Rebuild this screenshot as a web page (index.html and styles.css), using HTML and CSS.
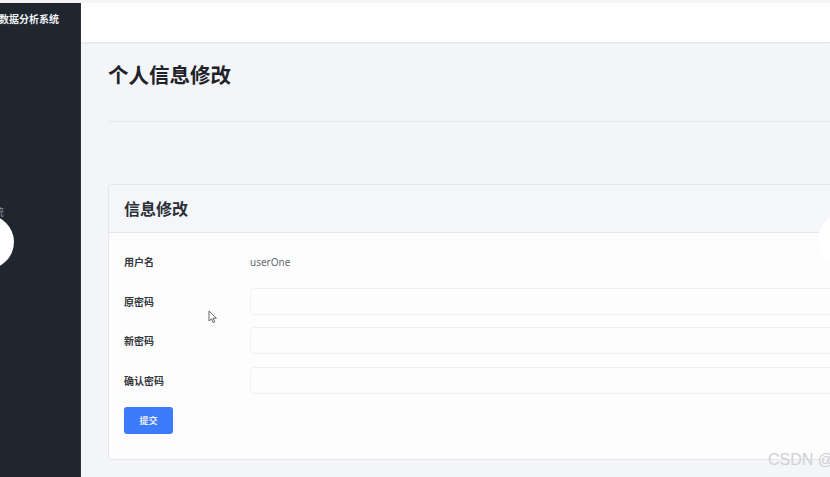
FILE: index.html
```html
<!DOCTYPE html>
<html lang="zh">
<head>
<meta charset="utf-8">
<title>个人信息修改</title>
<link rel="stylesheet" href="styles.css">
</head>
<body>
<div class="topstrip"></div>
<div class="app">
  <aside class="sidebar">
    <div class="brand">数据分析系统</div>
    <div class="menu-stub">统</div>
  </aside>
  <main class="main">
    <header class="header"></header>
    <section class="content">
      <div class="page-head">
        <h1 class="page-title">个人信息修改</h1>
      </div>
      <div class="card">
        <div class="card-header">信息修改</div>
        <div class="card-body">
          <div class="row">
            <label class="label">用户名</label>
            <div class="value">userOne</div>
          </div>
          <div class="row">
            <label class="label">原密码</label>
            <input class="input" type="password">
          </div>
          <div class="row">
            <label class="label">新密码</label>
            <input class="input" type="password">
          </div>
          <div class="row">
            <label class="label">确认密码</label>
            <input class="input" type="password">
          </div>
          <button class="btn">提交</button>
        </div>
      </div>
    </section>
  </main>
</div>
<div class="overlay-circle left"></div>
<div class="overlay-circle right"></div>
<svg class="cursor" width="10" height="14" viewBox="0 0 10 14"><path d="M1 1 L1 11 L3.5 8.8 L5.3 12.6 L6.8 11.9 L5 8.2 L8.4 8.2 Z" fill="#fff" stroke="#555" stroke-width="0.9" stroke-linejoin="round"/></svg>
<div class="watermark">CSDN @</div>
</body>
</html>
```
FILE: styles.css
```css
* { box-sizing: border-box; }
html, body {
  margin: 0;
  padding: 0;
  width: 830px;
  height: 477px;
  overflow: hidden;
  font-family: "Noto Sans CJK SC", "Noto Sans", sans-serif;
  background: #f3f5f8;
}
.topstrip {
  height: 3px;
  background: #f4f4f5;
}
.app {
  display: flex;
  height: 474px;
}
.sidebar {
  width: 81px;
  flex: 0 0 81px;
  background: #1f2630;
  position: relative;
  overflow: hidden;
  border-right: 1px solid #2c323b;
}
.brand {
  margin-left: -1px;
  margin-top: 9px;
  color: #f2f3f5;
  font-size: 10px;
  font-weight: 700;
  white-space: nowrap;
  line-height: 14px;
}
.menu-stub {
  position: absolute;
  left: -6px;
  top: 201px;
  font-size: 10px;
  color: #8a9099;
}
.main {
  flex: 1;
  display: flex;
  flex-direction: column;
  min-width: 0;
}
.header {
  height: 40px;
  flex: 0 0 40px;
  background: #fdfefd;
  border-bottom: 1px solid #e3e6ea;
  box-shadow: 0 1px 2px rgba(0,0,0,0.04);
}
.content {
  padding-left: 27px;
  margin-right: -20px;
}
.page-head {
  padding-top: 17px;
  padding-bottom: 33px;
  border-bottom: 1px solid #e5e8ec;
}
.page-title {
  margin: 0;
  height: 28px;
  line-height: 28px;
  font-size: 20.5px;
  font-weight: 700;
  color: #1f2329;
}
.card {
  margin-top: 62px;
  border: 1px solid #e3e6eb;
  border-radius: 4px;
  background: #fdfdfd;
  overflow: hidden;
}
.card-header {
  height: 48px;
  background: #f4f6f9;
  border-bottom: 1px solid #e3e6eb;
  padding-left: 15px;
  line-height: 46px;
  font-size: 16px;
  font-weight: 700;
  color: #2b2f36;
}
.card-body {
  padding: 15px 0 25px 15px;
  display: flex;
  flex-direction: column;
  gap: 12.5px;
}
.row {
  display: flex;
  align-items: center;
  height: 27px;
}
.label {
  width: 126px;
  flex: 0 0 126px;
  font-size: 10px;
  font-weight: 600;
  color: #33373d;
}
.value {
  font-size: 10px;
  color: #666a70;
  font-family: "Noto Sans", "Noto Sans CJK SC", sans-serif;
}
.input {
  flex: 1;
  height: 27px;
  border: 1px solid #eef0f3;
  border-radius: 4px;
  background: #fdfdfd;
  outline: none;
}
.btn {
  align-self: flex-start;
  width: 49px;
  height: 27px;
  margin-top: 0.5px;
  border: none;
  border-radius: 3px;
  background: #3c7bfc;
  color: #e8efff;
  font-family: "Noto Sans CJK SC", sans-serif;
  font-size: 9px;
  font-weight: 600;
  padding: 0;
}
.overlay-circle {
  position: absolute;
  width: 54px;
  height: 54px;
  border-radius: 50%;
  background: #ffffff;
}
.overlay-circle.left { left: -40px; top: 215px; }
.overlay-circle.right { left: 818px; top: 213px; }
.cursor {
  position: absolute;
  left: 208px;
  top: 310px;
}
.watermark {
  position: absolute;
  left: 768px;
  top: 451px;
  font-family: "Liberation Sans", sans-serif;
  font-size: 16px;
  color: #cfd0d2;
  white-space: nowrap;
}
```
